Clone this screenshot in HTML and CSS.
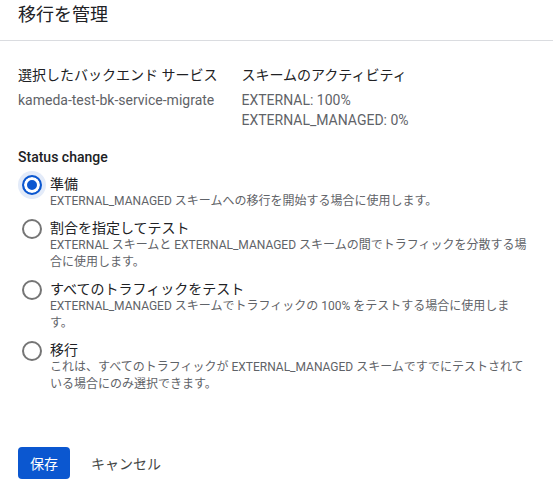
FILE: index.html
```html
<!DOCTYPE html>
<html lang="ja">
<head>
    <meta charset="UTF-8">
    <meta name="viewport" content="width=device-width, initial-scale=1.0">
    <title>移行を管理</title>
    <link rel="stylesheet" href="styles.css">
</head>
<body>
    <header class="title-bar">
        <h1>移行を管理</h1>
    </header>

    <main class="content">
        <div class="summary">
            <div class="summary-col">
                <div class="summary-label">選択したバックエンド サービス</div>
                <div class="summary-value">kameda-test-bk-service-migrate</div>
            </div>
            <div class="summary-col">
                <div class="summary-label">スキームのアクティビティ</div>
                <div class="summary-value">EXTERNAL: 100%</div>
                <div class="summary-value">EXTERNAL_MANAGED: 0%</div>
            </div>
        </div>

        <fieldset class="status">
            <legend>Status change</legend>

            <label class="option">
                <input type="radio" name="status" value="prepare" checked>
                <span class="option-text">
                    <span class="option-title">準備</span>
                    <span class="option-desc">EXTERNAL_MANAGED スキームへの移行を開始する場合に使用します。</span>
                </span>
            </label>

            <label class="option">
                <input type="radio" name="status" value="test-by-percentage">
                <span class="option-text">
                    <span class="option-title">割合を指定してテスト</span>
                    <span class="option-desc">EXTERNAL スキームと EXTERNAL_MANAGED スキームの間でトラフィックを分散する場合に使用します。</span>
                </span>
            </label>

            <label class="option">
                <input type="radio" name="status" value="test-all">
                <span class="option-text">
                    <span class="option-title">すべてのトラフィックをテスト</span>
                    <span class="option-desc">EXTERNAL_MANAGED スキームでトラフィックの 100% をテストする場合に使用しま<br>す。</span>
                </span>
            </label>

            <label class="option">
                <input type="radio" name="status" value="migrate">
                <span class="option-text">
                    <span class="option-title">移行</span>
                    <span class="option-desc">これは、すべてのトラフィックが EXTERNAL_MANAGED スキームですでにテストされている場合にのみ選択できます。</span>
                </span>
            </label>
        </fieldset>

        <div class="actions">
            <button class="btn btn-primary">保存</button>
            <button class="btn btn-text">キャンセル</button>
        </div>
    </main>
</body>
</html>
```

FILE: styles.css
```css
body {
    font-family: Roboto, "Noto Sans CJK JP", sans-serif;
    background-color: #fff;
    color: #202124;
    margin: 0;
}
.title-bar {
    padding: 3px 18px 13px;
    border-bottom: 1px solid #dadce0;
}
.title-bar h1 {
    font-size: 18px;
    font-weight: 400;
    line-height: 24px;
    margin: 0;
}
.content {
    padding: 24px 18px 20px;
}
.summary {
    display: flex;
    gap: 24px;
    font-size: 14px;
    line-height: 20px;
}
.summary-label {
    margin-bottom: 5px;
}
.summary-value {
    color: #5f6368;
}
.status {
    border: none;
    margin: 17px 0 0;
    padding: 0;
    display: flex;
    flex-direction: column;
    gap: 9px;
}
.status legend {
    font-size: 14px;
    font-weight: 500;
    line-height: 20px;
    padding: 0;
    margin-bottom: 8px;
}
.option {
    display: flex;
    align-items: flex-start;
    gap: 8px;
    cursor: pointer;
}
.option input {
    appearance: none;
    -webkit-appearance: none;
    flex: none;
    width: 20px;
    height: 20px;
    margin: 0 0 0 4px;
    border: 2px solid #757575;
    border-radius: 50%;
    background: #fff;
}
.option input:checked {
    border-color: #0b57d0;
    background: #0b57d0;
    box-shadow: inset 0 0 0 3px #fff, 0 0 0 4px #e3ebf9;
}
.option-text {
    display: flex;
    flex-direction: column;
}
.option-title {
    font-size: 14px;
    line-height: 18px;
}
.option-desc {
    font-size: 12px;
    line-height: 17px;
    color: #5f6368;
    padding-right: 2px;
}
.actions {
    display: flex;
    gap: 9px;
    margin-top: 54px;
}
.btn {
    font-family: inherit;
    font-size: 14px;
    height: 32px;
    padding: 0 12px;
    border: none;
    border-radius: 4px;
    cursor: pointer;
}
.btn-primary {
    background-color: #0b57d0;
    color: #fff;
}
.btn-text {
    background: none;
    color: #444746;
}
```
